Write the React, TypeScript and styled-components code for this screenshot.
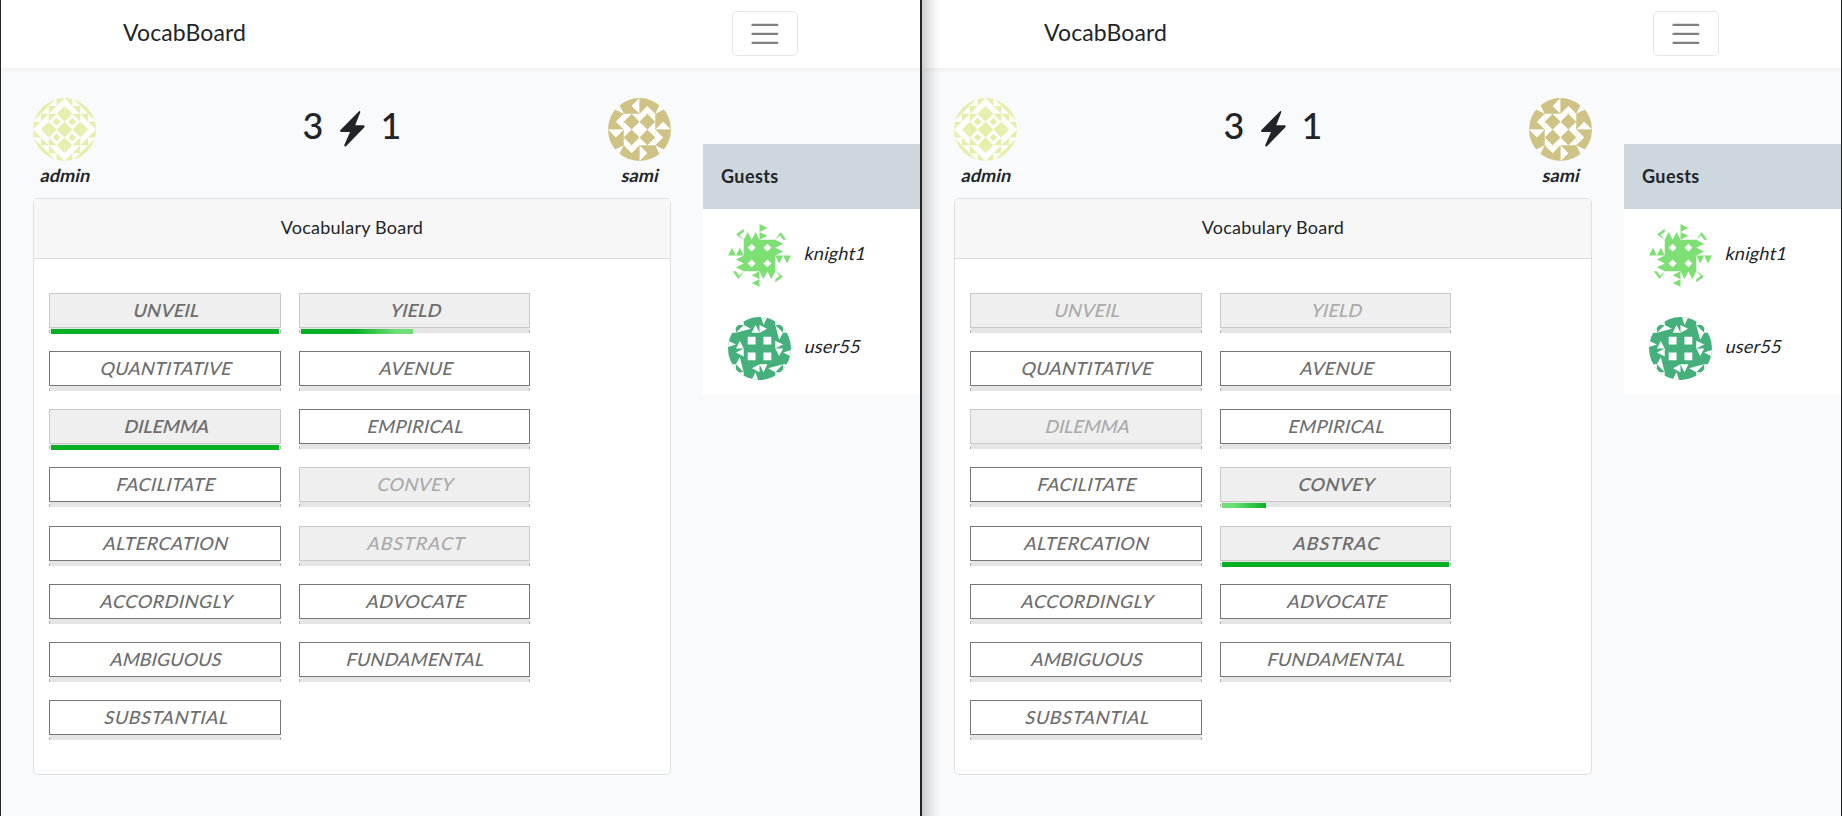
import React from 'react';
import styled, { createGlobalStyle } from 'styled-components';

const GlobalStyle = createGlobalStyle`
  *, *::before, *::after { box-sizing: border-box; }
  html, body { margin: 0; padding: 0; overflow: hidden; }
  body {
    background: #f8fafc;
    color: #212529;
    font-family: Lato, "Open Sans", sans-serif;
    font-size: 18px;
    line-height: 1.6;
  }
  button { font: inherit; color: inherit; }
  svg { display: block; }
`;

const Screen = styled.div`
  display: grid;
  grid-template-columns: 921px 921px;
  height: 816px;
`;

const Pane = styled.section<{ $shaded?: boolean }>`
  position: relative;
  height: 816px;
  overflow: hidden;
  background: #f8fafc;
  border-left: 1px solid #242628;
  border-right: 1px solid #242628;
  &::after {
    content: ${p => (p.$shaded ? '""' : 'none')};
    position: absolute;
    inset: 0 auto 0 0;
    width: 19px;
    background: linear-gradient(90deg, rgba(0,0,0,.19), rgba(0,0,0,.1) 35%, rgba(0,0,0,.03) 72%, transparent);
  }
`;

const Navbar = styled.header`
  display: flex;
  align-items: center;
  justify-content: space-between;
  height: 68px;
  padding: 0 122px 1px;
  background: #fff;
  box-shadow: 0 2px 4px rgba(0, 0, 0, 0.05);
`;

const Brand = styled.div`
  font-size: 23px;
  line-height: 36px;
  letter-spacing: 0.12px;
  margin-bottom: 4px;
`;

const Toggler = styled.button`
  display: grid;
  place-items: center;
  width: 66px;
  height: 45px;
  padding: 0;
  background: transparent;
  border: 1px solid rgba(0, 0, 0, 0.1);
  border-radius: 5px;
`;

const Main = styled.main`
  display: grid;
  grid-template-columns: 638px 217px;
  column-gap: 32px;
  padding: 30px 0 0 32px;
  align-items: start;
`;

const Scoreboard = styled.div`
  display: flex;
  justify-content: space-between;
  height: 100px;
`;

const Player = styled.div`
  display: flex;
  flex-direction: column;
  align-items: center;
  width: 63px;
`;

const PlayerName = styled.strong`
  line-height: 24px;
  margin-top: 2px;
  padding-left: 3px;
  font-weight: 700;
  letter-spacing: 0.15px;
  transform: skewX(-13deg);
`;

const Score = styled.div`
  display: flex;
  align-items: center;
  height: 56px;
  margin-top: -1px;
  font-size: 36px;
  font-weight: 500;
  gap: 15px;
  line-height: 54px;
  svg { margin-top: 6px; }
`;

const Card = styled.div`
  height: 577px;
  background: #fff;
  border: 1px solid #dfe0e2;
  border-radius: 5px;
  overflow: hidden;
`;

const CardHeader = styled.div`
  height: 60px;
  line-height: 57px;
  letter-spacing: 0.22px;
  text-align: center;
  background: #f7f7f7;
  border-bottom: 1px solid #dcdcdc;
`;

const Words = styled.div`
  display: grid;
  grid-template-columns: 232px 231px;
  column-gap: 18px;
  grid-auto-rows: 58.15px;
  padding: 34px 15px 0;
`;

type Mode = 'open' | 'typed' | 'locked';

const WordBox = styled.div<{ $mode: Mode }>`
  height: 35px;
  padding-left: 4px;
  border: 1px solid ${p => (p.$mode === 'open' ? '#767676' : '#c9c9c9')};
  background: ${p => (p.$mode === 'open' ? '#fff' : '#efefef')};
  color: ${p => (p.$mode === 'locked' ? '#aaa' : '#6e6e6e')};
  font-weight: ${p => (p.$mode === 'typed' ? 600 : 500)};
  line-height: 32px;
  text-align: center;
`;

const Slant = styled.span<{ $track: number }>`
  display: inline-block;
  transform: skewX(-14deg);
  letter-spacing: ${p => p.$track}px;
`;

const Track = styled.div`
  height: 6px;
  padding: 1px 2px 0;
  background:
    linear-gradient(#b0b0b0, #b0b0b0) 0 2px / 1px 3px no-repeat,
    linear-gradient(#b0b0b0, #b0b0b0) 100% 2px / 1px 3px no-repeat,
    linear-gradient(#e5e5e5, #e5e5e5) 1px 0 / calc(100% - 2px) 5px no-repeat;
`;

const Fill = styled.div<{ $paint: string }>`
  height: 5px;
  background: ${p => p.$paint};
`;

const Guests = styled.aside`
  margin-top: 46px;
  background: #fff;
`;

const GuestsTitle = styled.div`
  height: 65px;
  padding-left: 18px;
  line-height: 64px;
  font-weight: 700;
  letter-spacing: 0.4px;
  background: #cfd7de;
`;

const GuestRow = styled.div`
  display: flex;
  align-items: center;
  gap: 14px;
  height: 93px;
  padding: 0 0 1px 25px;
`;

const GuestName = styled.span`
  transform: skewX(-13deg);
  margin-top: -3px;
  letter-spacing: 0.25px;
`;

const turns = [0, 90, 180, 270];

type Pattern = 'admin' | 'sami' | 'knight' | 'user';

const core = 'M2 2h4v4H2z';

/* Identicons on an 8x8 unit grid: a base shape, then one quadrant turned four times. */
const patterns: Record<Pattern, { color: string; base: string; fill: string; holes: string; dots: string }> = {
  admin: {
    color: '#e7eeac',
    base: core,
    fill: 'M0 0H3L0 3z M3 0H4L3 1z M0 3H1L0 4z M2 1H3L2 2z M1 2H2L1 3z M4 1V2H3z M1 4H2V3z',
    holes: 'M3 2l1 1-1 1-1-1z',
    dots: 'M3 2.5l.5.5-.5.5-.5-.5z',
  },
  sami: {
    color: '#cec385',
    base: 'M0 0z',
    fill: 'M0 0h4v2H2v2H0z M3 2l1 1-1 1-1-1z',
    holes: 'M2 2L1 0H0v1z M4 0v2L3 1z M2 2v2L1 3z',
    dots: 'M0 0z',
  },
  knight: {
    color: '#7ee074',
    base: core,
    fill: 'M2 2.1V2l.5-1L3 2l.5-1L4 2v.1z M0 4l.5-1 .5 1 .5-1 .5 1z M2 .6L1 1.3 2 2.05 1.45 1.4 2 1z',
    holes: 'M3 2.5l.5.5-.5.5-.5-.5z',
    dots: 'M0 0z',
  },
  user: {
    color: '#45b07c',
    base: 'M0 0h8v8H0z',
    fill: 'M0 0z',
    holes: 'M0 0H2V1L2.9 1.5 1 2H0z M3.5 1L4 2H3z M4 1L4.95 1.5 4 2z M4.2 0H5L4.5 1z M2.5 2.5h1v1h-1z',
    dots: 'M1 1H2L1 2z',
  },
};

const Identicon = ({ id, kind }: { id: string; kind: Pattern }) => {
  const { color, base, fill, holes, dots } = patterns[kind];
  return (
    <svg width="63" height="63" viewBox="0 0 8 8" aria-hidden>
      <clipPath id={id}><circle cx="4" cy="4" r="4" /></clipPath>
      <g clipPath={`url(#${id})`}>
        <path fill="#fff" d="M0 0h8v8H0z" />
        <path fill={color} d={base} />
        {turns.map(t => (
          <g key={t} transform={`rotate(${t} 4 4)`}>
            <path fill={color} d={fill} />
            <path fill="#fff" d={holes} />
            <path fill={color} d={dots} />
          </g>
        ))}
      </g>
    </svg>
  );
};

const GREEN = '#06b025';

type Progress = { mode: Mode; text?: string; width?: number; paint?: string };

const words: { label: string; track: number }[] = [
  { label: 'UNVEIL', track: 0.3 }, { label: 'YIELD', track: 0.25 },
  { label: 'QUANTITATIVE', track: 0.28 }, { label: 'AVENUE', track: 0.4 },
  { label: 'DILEMMA', track: 0 }, { label: 'EMPIRICAL', track: 0.38 },
  { label: 'FACILITATE', track: 0.5 }, { label: 'CONVEY', track: 0.35 },
  { label: 'ALTERCATION', track: 0.55 }, { label: 'ABSTRACT', track: 0.95 },
  { label: 'ACCORDINGLY', track: 0.6 }, { label: 'ADVOCATE', track: 0.45 },
  { label: 'AMBIGUOUS', track: 0.15 }, { label: 'FUNDAMENTAL', track: 0.3 },
  { label: 'SUBSTANTIAL', track: 0.65 },
];

const adminView: Record<string, Progress> = {
  UNVEIL: { mode: 'typed', width: 228, paint: GREEN },
  YIELD: { mode: 'typed', width: 112, paint: 'linear-gradient(100deg, #06b025 48%, #6fe078 85%)' },
  DILEMMA: { mode: 'typed', width: 228, paint: GREEN },
  CONVEY: { mode: 'locked' },
  ABSTRACT: { mode: 'locked' },
};

const samiView: Record<string, Progress> = {
  UNVEIL: { mode: 'locked' },
  YIELD: { mode: 'locked' },
  DILEMMA: { mode: 'locked' },
  CONVEY: { mode: 'typed', width: 44, paint: 'linear-gradient(100deg, #6fe078 25%, #06b025)' },
  ABSTRACT: { mode: 'typed', text: 'ABSTRAC', width: 227, paint: GREEN },
};

const Board = ({ name, view, shaded }: { name: string; view: Record<string, Progress>; shaded?: boolean }) => (
  <Pane $shaded={shaded}>
    <Navbar>
      <Brand>VocabBoard</Brand>
      <Toggler aria-label="Menu">
        <svg width="33.75" height="33.75" viewBox="0 0 30 30">
          <path d="M4 7h22M4 15h22M4 23h22" stroke="rgba(0,0,0,.5)" strokeWidth="2" strokeLinecap="round" />
        </svg>
      </Toggler>
    </Navbar>
    <Main>
      <div>
        <Scoreboard>
          <Player>
            <Identicon id={`${name}-a`} kind="admin" />
            <PlayerName>admin</PlayerName>
          </Player>
          <Score>
            <span>3</span>
            <svg width="27" height="37" viewBox="0 0 27 37">
              <path d="M20 1.2 1.2 20.2Q.7 22 2 22H11L5.3 35Q5 37 7 36.2L25.4 17.2Q26.200 15.500 24.800 15.200H16.200L21.200 2.500Q21.600 .5 20 1.200Z" fill="#212529" />
            </svg>
            <span>1</span>
          </Score>
          <Player>
            <Identicon id={`${name}-s`} kind="sami" />
            <PlayerName>sami</PlayerName>
          </Player>
        </Scoreboard>
        <Card>
          <CardHeader>Vocabulary Board</CardHeader>
          <Words>
            {words.map(({ label, track }) => {
              const p = view[label] ?? { mode: 'open' as Mode };
              return (
                <div key={label}>
                  <WordBox $mode={p.mode}><Slant $track={track}>{p.text ?? label}</Slant></WordBox>
                  <Track>{p.width && <Fill $paint={p.paint!} style={{ width: p.width }} />}</Track>
                </div>
              );
            })}
          </Words>
        </Card>
      </div>
      <Guests>
        <GuestsTitle>Guests</GuestsTitle>
        <GuestRow>
          <Identicon id={`${name}-k`} kind="knight" />
          <GuestName>knight1</GuestName>
        </GuestRow>
        <GuestRow>
          <Identicon id={`${name}-u`} kind="user" />
          <GuestName>user55</GuestName>
        </GuestRow>
      </Guests>
    </Main>
  </Pane>
);

export default function App() {
  return (
    <>
      <GlobalStyle />
      <Screen>
        <Board name="left" view={adminView} />
        <Board name="right" view={samiView} shaded />
      </Screen>
    </>
  );
}
